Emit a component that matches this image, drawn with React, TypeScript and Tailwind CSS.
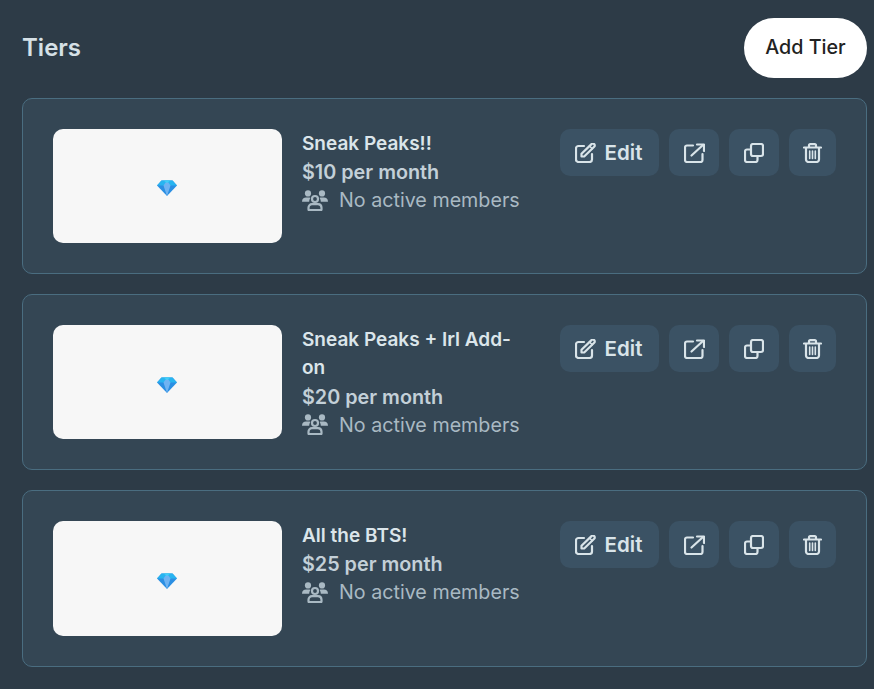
import React from "react";

const font = { fontFamily: '"Inter", "Noto Sans", sans-serif' };

function Gem() {
  return (
    <svg className="mt-[4.5px] mr-[1px]" width="20" height="16" viewBox="0 0 20 16">
      <path d="M4.5 0.5H15.5L20 5.5L10 16L0 5.5Z" fill="#2b8fe3" />
      <path d="M4.5 0.5H15.5L20 5.5H0Z" fill="#28b4f0" />
      <path d="M6.5 5.5L10 0.5L13.5 5.5L10 16Z" fill="#6fb3f2" />
      <path d="M6.5 0.5H13.5L10 3Z" fill="#3fd0f8" />
    </svg>
  );
}

const stroke = { fill: "none", stroke: "currentColor", strokeWidth: 2.2, strokeLinecap: "round", strokeLinejoin: "round" } as const;

function EditIcon() {
  return (
    <svg width="21" height="20" viewBox="0 0 21 20" {...stroke}>
      <path d="M9 3H3.5A2.5 2.5 0 0 0 1 5.5V16.5A2.5 2.5 0 0 0 3.5 19H14.5A2.5 2.5 0 0 0 17 16.5V11" />
      <path d="M6.5 10.8V13.5H9.2L19.2 3.8A1.9 1.9 0 0 0 16.5 1.1Z" />
      <path d="M14.5 3L17.3 5.8" strokeWidth="1.6" />
    </svg>
  );
}

function ExternalIcon() {
  return (
    <svg width="21" height="20" viewBox="0 0 21 20" {...stroke}>
      <path d="M9 2.5H3A2 2 0 0 0 1 4.5V17A2 2 0 0 0 3 19H16.5A2 2 0 0 0 18.5 17V11" />
      <path d="M7.5 12.5L19 2" />
      <path d="M13 1.5H20V8" />
    </svg>
  );
}

function CopyIcon() {
  return (
    <svg width="20" height="20" viewBox="0 0 20 20" {...stroke}>
      <rect x="7" y="1" width="12" height="12" rx="2" />
      <path d="M7 6.5H3A2 2 0 0 0 1 8.5V17A2 2 0 0 0 3 19H11.5A2 2 0 0 0 13.5 17V13" />
    </svg>
  );
}

function TrashIcon() {
  return (
    <svg width="19" height="20" viewBox="0 0 19 20" {...stroke}>
      <path d="M1 4.5H18" />
      <path d="M6 4V2.5A1.2 1.2 0 0 1 7.2 1.2H11.8A1.2 1.2 0 0 1 13 2.5V4" />
      <path d="M3 5V16.5A2.4 2.4 0 0 0 5.4 19H13.6A2.4 2.4 0 0 0 16 16.5V5" />
      <path d="M6.7 8V15.5M9.5 8V15.5M12.3 8V15.5" strokeWidth="1.6" />
    </svg>
  );
}

function UsersIcon() {
  return (
    <svg className="block" width="26" height="21" viewBox="0 0 26 21" fill="currentColor">
      <circle cx="6" cy="3.4" r="3.1" />
      <circle cx="20" cy="3.4" r="3.1" />
      <path d="M0 11.8C0 8.8 1.8 7.5 4 7.5H7.6C8 7.5 8.3 7.7 8.5 8C7.6 9 7.2 10.4 7.2 11.8H0Z" />
      <path d="M26 11.8C26 8.8 24.2 7.5 22 7.5H18.4C18 7.5 17.7 7.7 17.5 8C18.4 9 18.8 10.4 18.8 11.8H26Z" />
      <circle cx="13" cy="9" r="3" fill="none" stroke="currentColor" strokeWidth="2.2" />
      <path d="M6.5 19.6V17.8C6.5 15.6 8 14.2 10 14.2H16C18 14.2 19.5 15.6 19.5 17.8V19.6C19.5 20 19.2 20.2 18.8 20.2H7.2C6.8 20.2 6.5 20 6.5 19.6Z" fill="none" stroke="currentColor" strokeWidth="2.2" />
    </svg>
  );
}

function IconButton({ w, children }: { w: string; children: React.ReactNode }) {
  return (
    <button className={`${w} h-[47px] rounded-[10px] bg-[#3b5264] text-[#d9e4e9] flex items-center justify-center`}>
      {children}
    </button>
  );
}

function TierCard({ title, price }: { title: string; price: string }) {
  return (
    <div className="border border-[#4a6d80] rounded-[10px] bg-[#344654] p-[30px] flex items-start">
      <div className="w-[229px] h-[114.2px] shrink-0 rounded-[10px] bg-[#f7f7f7] flex items-center justify-center">
        <Gem />
      </div>
      <div className="ml-[20px] w-[228px] shrink-0 h-[114.2px] text-[19px] leading-[28.5px] font-semibold">
        <div className="text-[#dbe5ea] mt-[0.5px]">{title}</div>
        <div className="text-[#c3d0d8] text-[19.8px] leading-[28px]">{price}</div>
        <div className="flex items-center text-[#a9b9c3] font-normal text-[19.7px]">
          <span className="w-[37px] shrink-0"><UsersIcon /></span>
          <span className="whitespace-nowrap">No active members</span>
        </div>
      </div>
      <div className="ml-[30px] flex gap-[10px]">
        <IconButton w="w-[99px] pr-[2px]">
          <EditIcon />
          <span className="ml-[9px] mt-[1px] text-[20.5px] font-semibold">Edit</span>
        </IconButton>
        <IconButton w="w-[50px]"><ExternalIcon /></IconButton>
        <IconButton w="w-[50px]"><CopyIcon /></IconButton>
        <IconButton w="w-[47px]"><TrashIcon /></IconButton>
      </div>
    </div>
  );
}

export default function App() {
  return (
    <div className="w-[874px] h-[689px] overflow-hidden bg-[#2d3b47] pl-[22px] pr-[7px] pt-[18px]" style={font}>
      <div className="flex items-center justify-between h-[60px] mb-[20px]">
        <h1 className="text-[24px] font-semibold text-[#d5e0e6]">Tiers</h1>
        <button className="w-[123px] h-[60px] rounded-full bg-white text-[#222] text-[19.7px] font-medium">Add Tier</button>
      </div>
      <div className="flex flex-col gap-[20px]">
        <TierCard title="Sneak Peaks!!" price="$10 per month" />
        <TierCard title="Sneak Peaks + Irl Add-on" price="$20 per month" />
        <TierCard title="All the BTS!" price="$25 per month" />
      </div>
    </div>
  );
}
